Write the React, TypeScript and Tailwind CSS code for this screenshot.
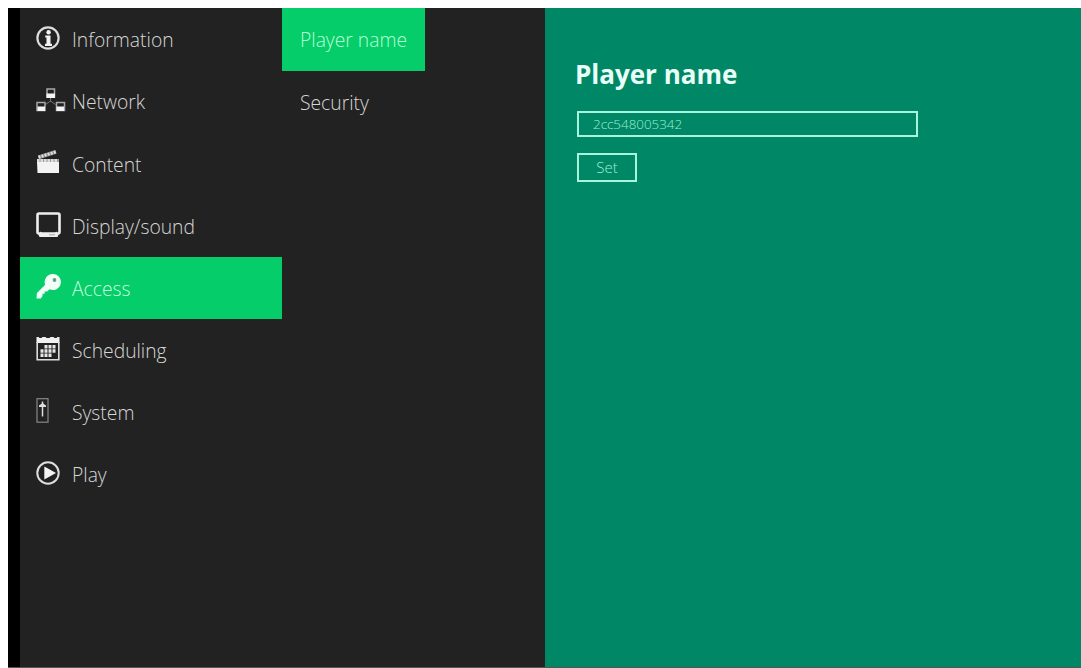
import React from 'react'

const InfoIcon = () => (
  <svg width="24" height="24" viewBox="0 0 24 24" fill="none">
    <circle cx="12" cy="12" r="10.6" stroke="#dcdcdc" strokeWidth="2.2" />
    <circle cx="12.6" cy="6.2" r="2.2" fill="#f2f2f2" />
    <path d="M9.2 9.500h5.300v8.300H16V20H9v-2.200h1.500v-6.300H9.200z" fill="#f2f2f2" />
  </svg>
)

const NetworkIcon = () => (
  <svg width="30" height="24" viewBox="0 0 30 24" fill="none">
    <path d="M14.500 10v3.500M9.500 16.500l5-3.500 5 3.500" stroke="#777" />
    <path
      d="M11 1h7.500v8H11zM1 14.500h8v8H1zM20.500 14.500h8v8h-8z"
      stroke="#a8a8a8"
      strokeWidth="1.500"
    />
    <path d="M10.500 5.500H19V10h-8.500zM1.500 18.500H9V23H1.500zM20.500 18.500H28V23h-7.500z" fill="#f5f5f5" />
  </svg>
)

const ContentIcon = () => (
  <svg width="24" height="24" viewBox="0 0 24 24" fill="none">
    <path d="M2.500 7.300L20 1.800" stroke="#888" strokeWidth="4" />
    <path d="M2.500 7.300L20 1.800" stroke="#ddd" strokeWidth="3" strokeDasharray="2 1.200" />
    <path d="M1 10.500h21.500" stroke="#999" strokeWidth="3" />
    <path d="M1 10.500h21.500" stroke="#ddd" strokeWidth="3" strokeDasharray="2.500 1" />
    <path d="M1 12h22v11H1.500z" fill="#f3f3f3" />
  </svg>
)

const DisplayIcon = () => (
  <svg width="25" height="25" viewBox="0 0 25 25" fill="none">
    <rect x="1.500" y="1.500" width="22" height="20" rx="1.500" stroke="#eee" strokeWidth="2.600" />
    <path d="M2 21.500h21l-1.500 3.500h-18z" fill="#eee" />
    <path d="M4 19.500v2h3zM21 19.500v2h-3z" fill="#eee" />
    <path d="M13 22.800h6" stroke="#aaa" />
  </svg>
)

const KeyIcon = () => (
  <svg width="25" height="25" viewBox="0 0 25 25">
    <path
      d="M16.500 0a8 8 0 0 0-7.400 10.700L.8 19.300.5 24.500h4.300L6.500 22v-2.300h2.200V17.500h2.500l2.300-2.300A8 8 0 1 0 16.500 0z"
      fill="#f1fff6"
    />
    <circle cx="18.500" cy="6" r="1.900" fill="#5ba47f" />
  </svg>
)

const CalendarIcon = () => (
  <svg width="24" height="25" viewBox="0 0 24 25" fill="none">
    <path d="M.5 1h2l1 1h2l1-1h3l1 1h3l1-1h3l1 1h2l1-1h2v6H.5z" fill="#f1f1f1" />
    <path d="M1.200 6v17.800h21.600V6" stroke="#ddd" strokeWidth="1.600" />
    <g fill="#e6e6e6">
      <path d="M8.500 9h3v3.500h-3zM12.500 9h3v3.500h-3zM16.500 9h3v3.500h-3z" />
      <path d="M4.500 13.300h3v3.500h-3zM8.500 13.300h3v3.500h-3zM12.500 13.300h3v3.500h-3zM16.500 13.300h3v3.500h-3z" />
      <path d="M4.500 17.600h3v3.500h-3zM8.500 17.600h3v3.500h-3zM12.500 17.600h3v3.500h-3z" />
    </g>
  </svg>
)

const SystemIcon = () => (
  <svg width="13" height="25" viewBox="0 0 13 25" fill="none">
    <rect x="1" y=".7" width="11" height="23.500" stroke="#888" strokeWidth="1.200" />
    <path d="M6.500 3.500v15" stroke="#ddd" strokeWidth="1.500" />
    <path d="M6.500 5L10 7.500v1.500H3V7.500z" fill="#ddd" />
  </svg>
)

const PlayIcon = () => (
  <svg width="24" height="24" viewBox="0 0 24 24" fill="none">
    <circle cx="12" cy="12" r="10.700" stroke="#ddd" strokeWidth="2" />
    <path d="M8.300 5.500v13L20 12z" fill="#f5f5f5" />
  </svg>
)

const menu = [
  { label: 'Information', icon: <InfoIcon /> },
  { label: 'Network', icon: <NetworkIcon /> },
  { label: 'Content', icon: <ContentIcon /> },
  { label: 'Display/sound', icon: <DisplayIcon /> },
  { label: 'Access', icon: <KeyIcon />, active: true },
  { label: 'Scheduling', icon: <CalendarIcon /> },
  { label: 'System', icon: <SystemIcon /> },
  { label: 'Play', icon: <PlayIcon /> },
]

export default function App() {
  return (
    <div className="h-[668px] w-[1081px] overflow-hidden bg-white pl-2 pt-2 font-['Open_Sans',sans-serif] font-light">
      <div className="flex h-[660px] border-b border-[#555] bg-[#222]">
        <div className="w-3 shrink-0 bg-black" />

        <nav className="w-[262px] shrink-0">
          {menu.map((item) => (
            <a
              key={item.label}
              className={
                item.active
                  ? 'flex h-[62.200px] items-center bg-[#04cd69] pl-4 text-[19.300px] text-[#c4ffdc]'
                  : 'flex h-[62.200px] items-center pl-4 text-[19.300px] text-[#d6d6d6]'
              }
            >
              <span className="flex w-9 shrink-0 pb-[3px]">{item.icon}</span>
              <span className="pt-[3px]">{item.label}</span>
            </a>
          ))}
        </nav>

        <div className="w-[263px] shrink-0">
          <a className="flex h-[63px] w-[143px] items-center whitespace-nowrap bg-[#04cd69] pl-[18px] pt-0.5 text-[19.300px] text-[#b8ffd4]">
            Player name
          </a>
          <a className="flex h-[62px] items-center pl-[18px] pt-0.5 text-[19.300px] text-[#d6d6d6]">
            Security
          </a>
        </div>

        <main className="flex-1 bg-[#008866] pl-8 pt-[47px]">
          <h1 className="-ml-0.5 text-[26px] font-bold leading-[38px] text-[#eafff8]">Player name</h1>
          <div className="mt-[18px] flex h-[26px] w-[341px] items-center border-2 border-[#a8f5de] pl-[14px] text-[13.400px] text-[#9deed3]">
            2cc548005342
          </div>
          <button className="mt-4 flex h-[29px] w-[60px] items-center justify-center border-2 border-[#a8f5de] text-[15px] text-[#9deed3]">
            Set
          </button>
        </main>
      </div>
    </div>
  )
}
